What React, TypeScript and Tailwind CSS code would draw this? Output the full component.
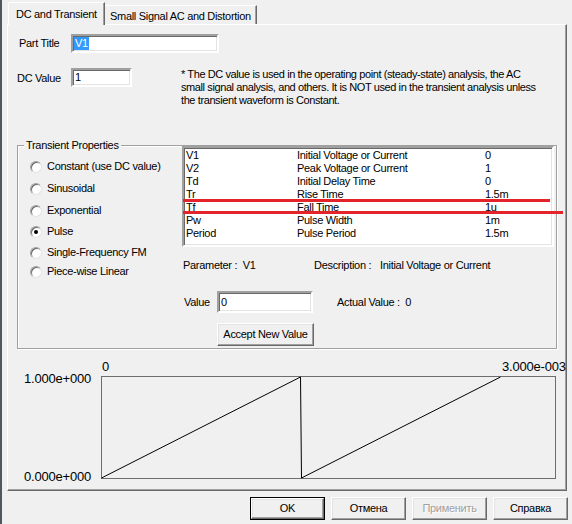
import React from "react";

const rows: [string, string, string][] = [
  ["V1", "Initial Voltage or Current", "0"],
  ["V2", "Peak Voltage or Current", "1"],
  ["Td", "Initial Delay Time", "0"],
  ["Tr", "Rise Time", "1.5m"],
  ["Tf", "Fall Time", "1u"],
  ["Pw", "Pulse Width", "1m"],
  ["Period", "Pulse Period", "1.5m"],
];

const sunken =
  "border-2 border-t-[#a0a0a0] border-l-[#a0a0a0] border-b-white border-r-white shadow-[inset_1px_1px_0_#696969,inset_-1px_-1px_0_#e3e3e3] bg-white";

function Radio({ label, checked, mt }: { label: string; checked?: boolean; mt: string }) {
  return (
    <div className={`flex items-center h-[13px] pl-[12px] ${mt}`}>
      <span className="w-[12px] h-[12px] rounded-full bg-white border border-t-[#a0a0a0] border-l-[#a0a0a0] border-b-[#e3e3e3] border-r-[#e3e3e3] shadow-[inset_1px_1px_0_#696969] flex items-center justify-center shrink-0">
        {checked && <span className="w-[4px] h-[4px] rounded-full bg-black" />}
      </span>
      <span className="ml-[5px] whitespace-nowrap">{label}</span>
    </div>
  );
}

function Btn({ children, def, disabled }: { children: React.ReactNode; def?: boolean; disabled?: boolean }) {
  return (
    <div
      className={`w-[75px] h-[23px] flex items-center justify-center ${
        def ? "border border-black" : ""
      }`}
    >
      <div
        className={`w-full h-full flex items-center justify-center bg-[#f0f0f0] border border-t-white border-l-white border-b-[#696969] border-r-[#696969] shadow-[inset_-1px_-1px_0_#a0a0a0,inset_1px_1px_0_#e3e3e3] ${
          disabled ? "text-[#a0a0a0] [text-shadow:1px_1px_0_#fff]" : "text-black"
        }`}
      >
        {children}
      </div>
    </div>
  );
}

export default function App() {
  return (
    <div className="w-[572px] h-[524px] bg-[#f0f0f0] flex overflow-hidden font-['Liberation_Sans',Arial,sans-serif] text-[11px] tracking-[-0.3px] text-black leading-[13px]">
      <div className="w-[2px] h-full bg-[#4f5861] shrink-0" />
      <div className="flex flex-col pl-[5px] pt-[2px]">
        {/* tabs */}
        <div className="flex items-end h-[22px]">
          <div className="relative z-10 ml-[1px] w-[97px] h-[23px] -mb-[1px] bg-[#f0f0f0] border-t border-l border-white border-r border-r-[#696969] shadow-[inset_-1px_0_0_#a0a0a0] pl-[7px] pt-[5px] whitespace-nowrap">
            DC and Transient
          </div>
          <div className="w-[152px] h-[19px] bg-[#f0f0f0] border-t border-white border-r border-r-[#696969] shadow-[inset_-1px_0_0_#a0a0a0] pl-[5px] pt-[4px] whitespace-nowrap">
            Small Signal AC and Distortion
          </div>
        </div>
        {/* panel */}
        <div className="w-[560px] h-[467px] border-t border-l border-white border-r border-b border-r-[#696969] border-b-[#696969] shadow-[inset_-1px_-1px_0_#a0a0a0] flex flex-col overflow-hidden">
          <div className="mt-[9px] h-[19px] flex items-center pl-[11px]">
            <span className="w-[52px]">Part Title</span>
            <div className={`w-[148px] h-[19px] ${sunken} flex items-center pl-[1px]`}>
              <span className="bg-[#3399ff] text-white h-[13px] px-[1px]">V1</span>
            </div>
          </div>
          <div className="mt-[15px] flex items-start pl-[9px]">
            <span className="w-[54px] h-[19px] flex items-center pt-[2px]">DC Value</span>
            <div className={`w-[61px] h-[19px] ${sunken} flex items-center pl-[2px]`}>1</div>
            <div className="ml-[49px] whitespace-nowrap tracking-[-0.4px]">
              * The DC value is used in the operating point (steady-state) analysis, the AC
              <br />
              small signal analysis, and others. It is NOT used in the transient analysis unless
              <br />
              the transient waveform is Constant.
            </div>
          </div>
          {/* group box */}
          <div className="relative mt-[38px] ml-[9px] w-[540px] h-[204px] shrink-0 border border-[#a0a0a0] shadow-[inset_1px_1px_0_#fff,1px_1px_0_#fff] flex">
            <span className="absolute left-[6px] -top-[7px] bg-[#f0f0f0] px-[2px] whitespace-nowrap">
              Transient Properties
            </span>
            <div className="w-[164px] flex flex-col shrink-0">
              <Radio label="Constant (use DC value)" mt="mt-[14px]" />
              <Radio label="Sinusoidal" mt="mt-[9px]" />
              <Radio label="Exponential" mt="mt-[9px]" />
              <Radio label="Pulse" checked mt="mt-[8px]" />
              <Radio label="Single-Frequency FM" mt="mt-[8px]" />
              <Radio label="Piece-wise Linear" mt="mt-[6px]" />
            </div>
            <div className="flex flex-col">
              <div className={`w-[372px] h-[101px] ${sunken} pt-[1px] pl-[2px]`}>
                {rows.map((r) => (
                  <div key={r[0]} className="flex h-[13px] items-center whitespace-nowrap">
                    <span className="w-[111px]">{r[0]}</span>
                    <span className="w-[188px]">{r[1]}</span>
                    <span>{r[2]}</span>
                  </div>
                ))}
              </div>
              <div className="mt-[12px] ml-[1px] flex h-[13px] items-center whitespace-nowrap">
                <span className="w-[131px]">Parameter :&nbsp; V1</span>
                <span className="w-[66px]">Description :</span>
                <span>Initial Voltage or Current</span>
              </div>
              <div className="mt-[19px] flex items-center pl-[2px]">
                <span className="w-[33px]">Value</span>
                <div className={`w-[96px] h-[22px] ${sunken} flex items-center pl-[2px]`}>0</div>
                <span className="ml-[24px] whitespace-nowrap">Actual Value :&nbsp; 0</span>
              </div>
              <div className="mt-[10px] ml-[35px] w-[97px] h-[23px] flex items-center justify-center bg-[#f0f0f0] border border-t-white border-l-white border-b-[#696969] border-r-[#696969] shadow-[inset_-1px_-1px_0_#a0a0a0,inset_1px_1px_0_#e3e3e3] whitespace-nowrap">
                Accept New Value
              </div>
            </div>
            {/* red marks */}
            <div className="absolute left-[165px] top-[53px] w-[367px] h-[3px] bg-[#e3242b]" />
            <div className="absolute left-[165px] top-[65px] w-[380px] h-[3px] bg-[#e3242b]" />
          </div>
          {/* chart */}
          <div className="mt-[11px] flex text-[13px] tracking-[-0.2px]">
            <div className="w-[93px] h-[124px] flex flex-col justify-between items-end pr-[10px] pt-[11px] shrink-0 leading-[15px]">
              <span>1.000e+000</span>
              <span>0.000e+000</span>
            </div>
            <div className="flex flex-col">
              <div className="flex h-[13px] items-center whitespace-nowrap">
                <span className="ml-[1px]">0</span>
                <span className="ml-[393px]">3.000e-003</span>
              </div>
              <svg width="455" height="103" className="mt-[3px] block">
                <rect x="0.5" y="0.5" width="454" height="102" fill="none" stroke="#6d6d6d" />
                <polyline
                  points="0.5,102 199.5,1 200.5,102 399.5,1"
                  fill="none"
                  stroke="#000"
                  strokeWidth="1"
                />
              </svg>
            </div>
          </div>
        </div>
        {/* buttons */}
        <div className="mt-[6px] flex justify-end gap-[6px] pr-[4px] w-[565px]">
          <Btn def>OK</Btn>
          <Btn>Отмена</Btn>
          <Btn disabled>Применить</Btn>
          <Btn>Справка</Btn>
        </div>
      </div>
    </div>
  );
}
